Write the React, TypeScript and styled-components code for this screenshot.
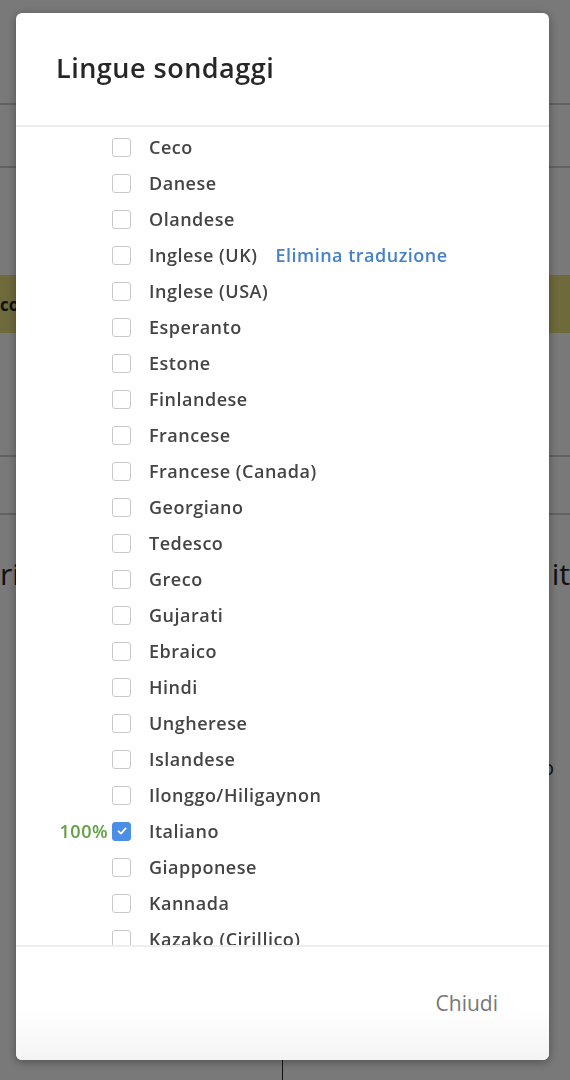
import React from 'react';
import styled, { createGlobalStyle } from 'styled-components';

const GlobalStyle = createGlobalStyle`
  html, body {
    margin: 0;
    padding: 0;
    width: 570px;
    height: 1080px;
    overflow: hidden;
    font-family: 'Open Sans', 'Liberation Sans', sans-serif;
  }
  * { box-sizing: border-box; }
`;

const Page = styled.div`
  width: 570px;
  height: 1080px;
  background: #f2f2f2;
  display: flex;
  flex-direction: column;
`;

const PageBand = styled.div<{ h: number; line?: boolean; tone?: string }>`
  height: ${({ h }) => h}px;
  flex-shrink: 0;
  background: ${({ tone }) => tone || '#f2f2f2'};
  border-bottom: ${({ line }) => (line ? '2px solid #c4c4c4' : 'none')};
  display: flex;
  align-items: center;
  font-size: 17px;
  font-weight: 700;
  color: #222;
`;

const PageColumns = styled.div`
  flex: 1;
  display: grid;
  grid-template-columns: 283px 1fr;
`;

const PageColumn = styled.div<{ side: 'left' | 'right' }>`
  border-right: ${({ side }) => (side === 'left' ? '1px solid #222' : 'none')};
  display: flex;
  flex-direction: column;
  align-items: ${({ side }) => (side === 'left' ? 'flex-start' : 'flex-end')};
  padding-top: 38px;
  font-size: 30px;
  color: #222;
`;

const SmallGlyph = styled.span`
  margin-top: 160px;
  font-size: 20px;
  margin-right: 16px;
`;

const Overlay = styled.div`
  position: fixed;
  inset: 0;
  background: rgba(0, 0, 0, 0.5);
`;

const Modal = styled.div`
  position: fixed;
  left: 16px;
  top: 13px;
  width: 533px;
  height: 1047px;
  background: #fff;
  border-radius: 6px;
  box-shadow: 0 2px 10px rgba(0, 0, 0, 0.35);
  display: flex;
  flex-direction: column;
  overflow: hidden;
`;

const Header = styled.div`
  height: 114px;
  flex-shrink: 0;
  border-bottom: 2px solid #ececec;
  display: flex;
  align-items: center;
  padding: 0 40px 4px;
`;

const Title = styled.h2`
  margin: 0;
  font-size: 27px;
  font-weight: 600;
  color: #262626;
  letter-spacing: 0.5px;
`;

const List = styled.div`
  height: 820px;
  flex-shrink: 0;
  overflow: hidden;
  padding: 2px 0 0 40px;
  border-bottom: 2px solid #eeeeee;
`;

const Row = styled.div`
  height: 36px;
  display: flex;
  align-items: center;
  font-size: 18px;
  font-weight: 600;
  letter-spacing: 0.5px;
`;

const Percent = styled.span`
  width: 56px;
  text-align: right;
  padding-right: 4px;
  color: #62a043;
`;

const Box = styled.span<{ checked?: boolean }>`
  width: 19px;
  height: 19px;
  border-radius: 3px;
  border: 1px solid ${({ checked }) => (checked ? '#4a8ee6' : '#c9c9c9')};
  background: ${({ checked }) => (checked ? '#4a8ee6' : '#fff')};
  display: flex;
  align-items: center;
  justify-content: center;
  flex-shrink: 0;
`;

const Label = styled.span`
  margin-left: 18px;
  color: #444;
`;

const Action = styled.span`
  margin-left: 18px;
  color: #4682c6;
`;

const Footer = styled.div`
  flex: 1;
  display: flex;
  align-items: center;
  justify-content: flex-end;
  padding: 0 51px 0 0;
  background: linear-gradient(#fff 55%, #f4f4f4);
`;

const CloseButton = styled.button`
  border: none;
  background: none;
  font-family: inherit;
  font-size: 21px;
  font-weight: 500;
  color: #777;
  padding: 0;
  margin-bottom: 2px;
`;

type Lang = { name: string; pct?: string; checked?: boolean; action?: string };

const languages: Lang[] = [
  { name: 'Ceco' },
  { name: 'Danese' },
  { name: 'Olandese' },
  { name: 'Inglese (UK)', action: 'Elimina traduzione' },
  { name: 'Inglese (USA)' },
  { name: 'Esperanto' },
  { name: 'Estone' },
  { name: 'Finlandese' },
  { name: 'Francese' },
  { name: 'Francese (Canada)' },
  { name: 'Georgiano' },
  { name: 'Tedesco' },
  { name: 'Greco' },
  { name: 'Gujarati' },
  { name: 'Ebraico' },
  { name: 'Hindi' },
  { name: 'Ungherese' },
  { name: 'Islandese' },
  { name: 'Ilonggo/Hiligaynon' },
  { name: 'Italiano', pct: '100%', checked: true },
  { name: 'Giapponese' },
  { name: 'Kannada' },
  { name: 'Kazako (Cirillico)' },
];

const Check = () => (
  <svg width="12" height="12" viewBox="0 0 12 12">
    <path d="M2.5 6.3 L5 8.6 L9.6 3.4" fill="none" stroke="#fff" strokeWidth="1.8" strokeLinecap="round" strokeLinejoin="round" />
  </svg>
);

const App = () => (
  <>
    <GlobalStyle />
    <Page>
      <PageBand h={105} line />
      <PageBand h={63} line />
      <PageBand h={107} />
      <PageBand h={58} tone="#ded479">co</PageBand>
      <PageBand h={124} line />
      <PageBand h={58} line />
      <PageColumns>
        <PageColumn side="left">ri</PageColumn>
        <PageColumn side="right">
          it
          <SmallGlyph>o</SmallGlyph>
        </PageColumn>
      </PageColumns>
    </Page>
    <Overlay />
    <Modal>
      <Header>
        <Title>Lingue sondaggi</Title>
      </Header>
      <List>
        {languages.map(l => (
          <Row key={l.name}>
            <Percent>{l.pct}</Percent>
            <Box checked={l.checked}>{l.checked && <Check />}</Box>
            <Label>{l.name}</Label>
            {l.action && <Action>{l.action}</Action>}
          </Row>
        ))}
      </List>
      <Footer>
        <CloseButton>Chiudi</CloseButton>
      </Footer>
    </Modal>
  </>
);

export default App;
